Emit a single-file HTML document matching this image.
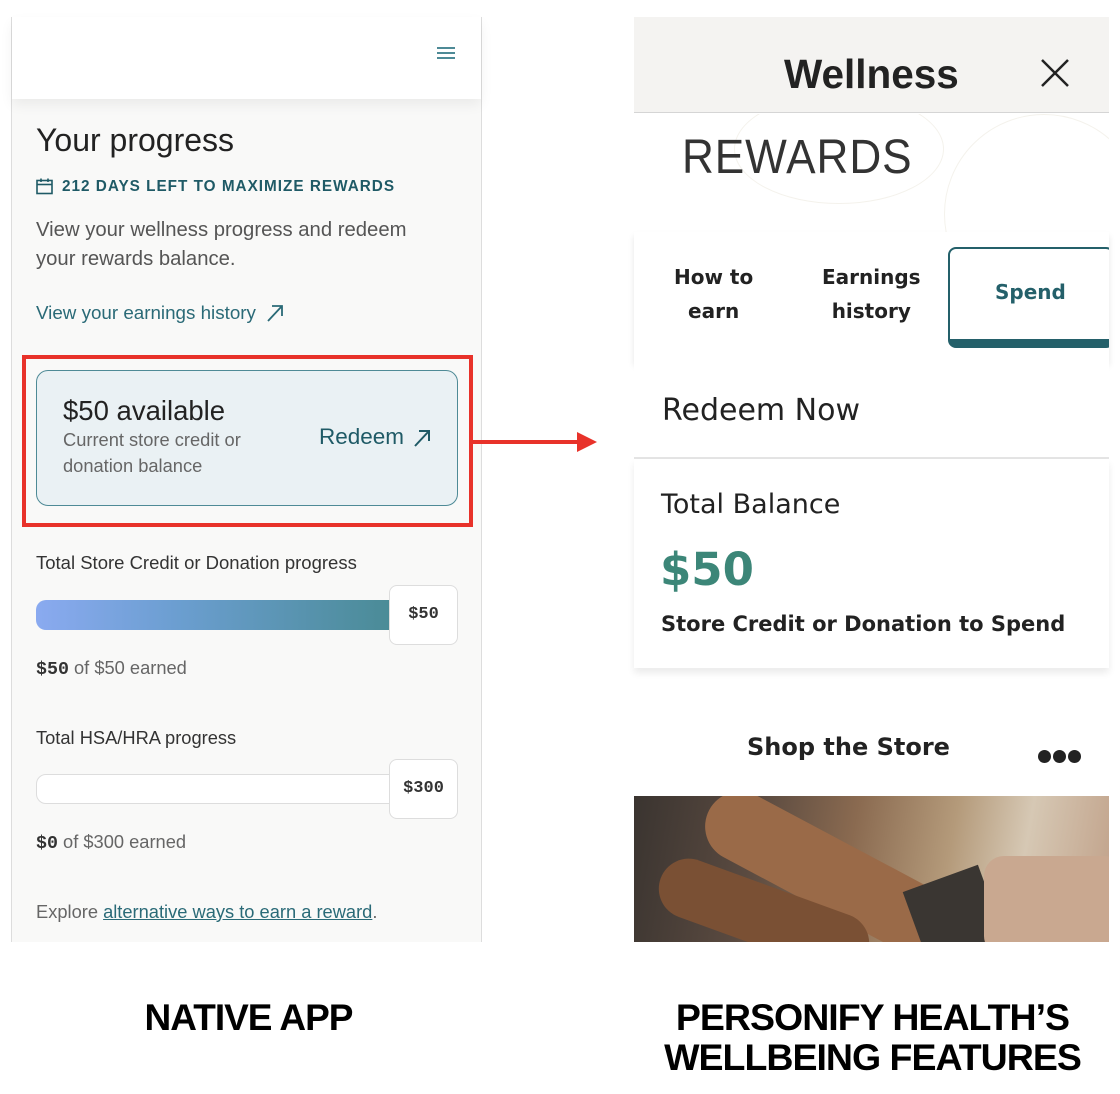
<!DOCTYPE html>
<html><head><meta charset="utf-8"><style>
*{margin:0;padding:0;box-sizing:border-box}
body{width:1120px;height:1094px;background:#fff;position:relative;overflow:hidden;font-family:"Liberation Sans",sans-serif}
.a{position:absolute;white-space:nowrap}
.teal{color:#1f5a66}
</style></head><body>
<!-- LEFT PANEL -->
<div class="a" style="left:11px;top:17px;width:471px;height:925px;background:#f9f9f8;border-left:1px solid #ddd;border-right:1px solid #ddd"></div>
<div class="a" style="left:12px;top:17px;width:469px;height:82px;background:#fff;box-shadow:0 6px 12px rgba(0,0,0,.06)"></div>
<div class="a" style="left:437px;top:47px;width:18px;height:2px;background:#4e8a96;box-shadow:0 5px 0 #4e8a96,0 10px 0 #4e8a96"></div>
<div class="a" style="left:36px;top:122px;font-size:32px;color:#222">Your progress</div>
<svg class="a" style="left:36px;top:178px" width="17" height="17" viewBox="0 0 17 17"><rect x="1" y="2.5" width="15" height="13" fill="none" stroke="#1f5a66" stroke-width="1.6"/><line x1="1" y1="6.5" x2="16" y2="6.5" stroke="#1f5a66" stroke-width="1.6"/><line x1="5" y1="0.5" x2="5" y2="4" stroke="#1f5a66" stroke-width="1.6"/><line x1="12" y1="0.5" x2="12" y2="4" stroke="#1f5a66" stroke-width="1.6"/></svg>
<div class="a teal" style="left:62px;top:178px;font-size:15.3px;font-weight:bold;letter-spacing:1px">212 DAYS LEFT TO MAXIMIZE REWARDS</div>
<div class="a" style="left:36px;top:216px;font-size:20.3px;line-height:29px;color:#555">View your wellness progress and redeem<br>your rewards balance.</div>
<div class="a" style="left:36px;top:302px;font-size:18.8px;color:#2a6a77">View your earnings history</div>
<svg class="a" style="left:265px;top:303px" width="20" height="20" viewBox="0 0 20 20"><path d="M3 18L17 3M7 3H17V13" fill="none" stroke="#2a6a77" stroke-width="1.8"/></svg>
<div class="a" style="left:22px;top:355px;width:451px;height:172px;border:4px solid #e8322a"></div>
<div class="a" style="left:36px;top:370px;width:422px;height:136px;background:#eaf1f4;border:1.5px solid #4e8a96;border-radius:12px"></div>
<div class="a" style="left:63px;top:395px;font-size:27.5px;color:#222">$50 available</div>
<div class="a" style="left:63px;top:427px;font-size:18.3px;line-height:26px;color:#666">Current store credit or<br>donation balance</div>
<div class="a teal" style="left:319px;top:424px;font-size:22.5px">Redeem</div>
<svg class="a" style="left:412px;top:428px" width="20" height="20" viewBox="0 0 20 20"><path d="M3 18L17 3M7 3H17V13" fill="none" stroke="#1f5a66" stroke-width="2"/></svg>
<div class="a" style="left:36px;top:552px;font-size:18.5px;color:#333">Total Store Credit or Donation progress</div>
<div class="a" style="left:36px;top:600px;width:356px;height:30px;border-radius:10px 0 0 10px;background:linear-gradient(90deg,#8aaaf0,#6b9ed0 40%,#4a8b96)"></div>
<div class="a" style="left:389px;top:585px;width:69px;height:60px;background:#fff;border:1px solid #ddd;border-radius:8px;font-family:'Liberation Mono',monospace;font-weight:bold;font-size:17px;color:#333;text-align:center;line-height:58px">$50</div>
<div class="a" style="left:36px;top:657px;font-size:18.3px;color:#666"><b style="color:#333;font-family:'Liberation Mono',monospace">$50</b> of $50 earned</div>
<div class="a" style="left:36px;top:727px;font-size:18.3px;color:#333">Total HSA/HRA progress</div>
<div class="a" style="left:36px;top:774px;width:356px;height:30px;border-radius:10px 0 0 10px;background:#fff;border:1px solid #ddd"></div>
<div class="a" style="left:389px;top:759px;width:69px;height:60px;background:#fff;border:1px solid #ddd;border-radius:8px;font-family:'Liberation Mono',monospace;font-weight:bold;font-size:17px;color:#333;text-align:center;line-height:58px">$300</div>
<div class="a" style="left:36px;top:831px;font-size:18.3px;color:#666"><b style="color:#333;font-family:'Liberation Mono',monospace">$0</b> of $300 earned</div>
<div class="a" style="left:36px;top:901px;font-size:18.3px;color:#666">Explore <span style="color:#2a6a77;text-decoration:underline">alternative ways to earn a reward</span>.</div>
<!-- arrow -->
<div class="a" style="left:473px;top:440px;width:110px;height:4px;background:#e8322a"></div>
<div class="a" style="left:577px;top:432px;width:0;height:0;border-left:20px solid #e8322a;border-top:10px solid transparent;border-bottom:10px solid transparent"></div>
<!-- RIGHT PANEL -->
<div class="a" style="left:634px;top:17px;width:475px;height:96px;background:#f4f3f1;border-bottom:1px solid #d5d5d5"></div>
<div class="a" style="left:784px;top:51px;font-size:40.5px;font-weight:bold;color:#222">Wellness</div>
<svg class="a" style="left:1040px;top:58px" width="30" height="30" viewBox="0 0 30 30"><path d="M2 2L28 28M28 2L2 28" stroke="#222" stroke-width="2.5"/></svg>
<div class="a" style="left:634px;top:114px;width:475px;height:118px;background:#fff;overflow:hidden">
<div class="a" style="left:100px;top:-20px;width:210px;height:110px;border:1px solid #f4f2ec;border-radius:50%"></div>
<div class="a" style="left:310px;top:0;width:200px;height:200px;border:1px solid #f4f2ec;border-radius:50%"></div>
</div>
<div class="a" style="left:682px;top:130px;font-size:48px;font-weight:300;color:#333;letter-spacing:1px;transform:scaleX(.92);transform-origin:left">REWARDS</div>
<div class="a" style="left:634px;top:232px;width:475px;height:130px;background:#fff;box-shadow:0 4px 6px rgba(0,0,0,.1)"></div>
<div class="a" style="left:674px;top:260px;line-height:34px;font-weight:bold;color:#222;text-align:center;font-family:'DejaVu Sans',sans-serif;font-size:20px">How to<br>earn</div>
<div class="a" style="left:822px;top:260px;font-size:20px;line-height:34px;font-weight:bold;color:#222;text-align:center;font-family:'DejaVu Sans',sans-serif">Earnings<br>history</div>
<div class="a" style="left:634px;top:232px;width:475px;height:130px;overflow:hidden">
<div class="a" style="left:314px;top:15px;width:166px;height:101px;border:2.5px solid #24606a;border-bottom:9px solid #24606a;border-radius:8px;background:#fff"></div>
</div>
<div class="a" style="left:995px;top:280px;font-size:20px;font-weight:bold;color:#24606a;font-family:'DejaVu Sans',sans-serif">Spend</div>
<div class="a" style="left:634px;top:362px;width:475px;height:97px;background:#fff;border-bottom:2px solid #e4e4e4"></div>
<div class="a" style="left:662px;top:393px;color:#222;font-family:'DejaVu Sans',sans-serif;font-size:30px">Redeem Now</div>
<div class="a" style="left:634px;top:459px;width:475px;height:209px;background:#fff;box-shadow:0 5px 7px rgba(0,0,0,.08)"></div>
<div class="a" style="left:661px;top:489px;font-size:27px;color:#222;font-family:'DejaVu Sans',sans-serif">Total Balance</div>
<div class="a" style="left:660px;top:543px;font-size:45px;font-weight:bold;color:#3c8678;font-family:'DejaVu Sans',sans-serif">$50</div>
<div class="a" style="left:661px;top:612px;font-size:21px;font-weight:bold;color:#222;font-family:'DejaVu Sans',sans-serif">Store Credit or Donation to Spend</div>
<div class="a" style="left:747px;top:733px;font-size:24px;font-weight:bold;color:#222;font-family:'DejaVu Sans',sans-serif">Shop the Store</div>
<div class="a" style="left:1038px;top:750px;width:13px;height:13px;border-radius:50%;background:#222;box-shadow:15px 0 0 #222,30px 0 0 #222"></div>
<div class="a" style="left:634px;top:796px;width:475px;height:146px;background:linear-gradient(100deg,#3a3430 0%,#5a4a40 25%,#8a6a50 45%,#b49a7a 65%,#d6c8b4 80%,#c0a088 100%);overflow:hidden">
<div class="a" style="left:60px;top:40px;width:260px;height:70px;border-radius:40px;background:#9a6a48;transform:rotate(28deg)"></div>
<div class="a" style="left:20px;top:90px;width:220px;height:60px;border-radius:30px;background:#7a5034;transform:rotate(20deg)"></div>
<div class="a" style="left:280px;top:80px;width:80px;height:80px;background:#3a3632;transform:rotate(-20deg)"></div>
<div class="a" style="left:350px;top:60px;width:140px;height:100px;background:#c9a890;border-radius:20px"></div>
</div>
<!-- captions -->
<div class="a" style="left:0;width:497px;top:997px;text-align:center;font-size:37px;font-weight:bold;color:#000;letter-spacing:-1px">NATIVE APP</div>
<div class="a" style="left:620px;width:505px;top:997px;text-align:center;font-size:37.5px;font-weight:bold;color:#000;line-height:40px;letter-spacing:-1px">PERSONIFY HEALTH’S<br>WELLBEING FEATURES</div>
</body></html>
